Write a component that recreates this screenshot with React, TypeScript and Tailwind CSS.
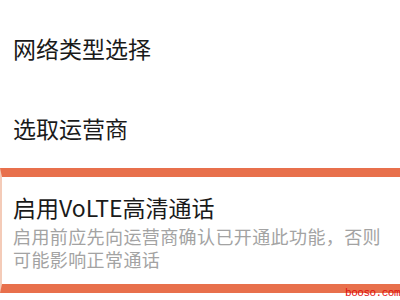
export default function App() {
  return (
    <main
      className="relative h-[300px] w-[400px] overflow-hidden bg-white pt-[8px]"
      style={{ fontFamily: '"Noto Sans CJK SC", "Noto Sans", sans-serif' }}
    >
      <div className="flex h-[80px] items-center px-[13px] text-[23px] leading-[28px] text-[#1a1a1a]">
        网络类型选择
      </div>
      <div className="flex h-[80px] items-center px-[13px] text-[23px] leading-[28px] text-[#1a1a1a]">
        选取运营商
      </div>

      <section className="border-y-[9px] border-l-2 border-y-[#e8704c] border-l-[#f4cbb8] pb-[13px] pl-[11px] pr-[13px] pt-[16px]">
        <p className="text-[23px] leading-[28px] text-[#1a1a1a]">
          启用VoLTE高清通话
        </p>
        <p className="mt-[4px] text-[18px] leading-[23px] tracking-[0.4px] text-[#a3a3a3]">
          启用前应先向运营商确认已开通此功能，否则可能影响正常通话
        </p>
      </section>

      <span
        className="absolute bottom-[1px] right-0 text-[11px] leading-[12px] tracking-[-0.5px] text-[#e01010]"
        style={{ fontFamily: '"Liberation Mono", monospace' }}
      >
        booso.com
      </span>
    </main>
  );
}
